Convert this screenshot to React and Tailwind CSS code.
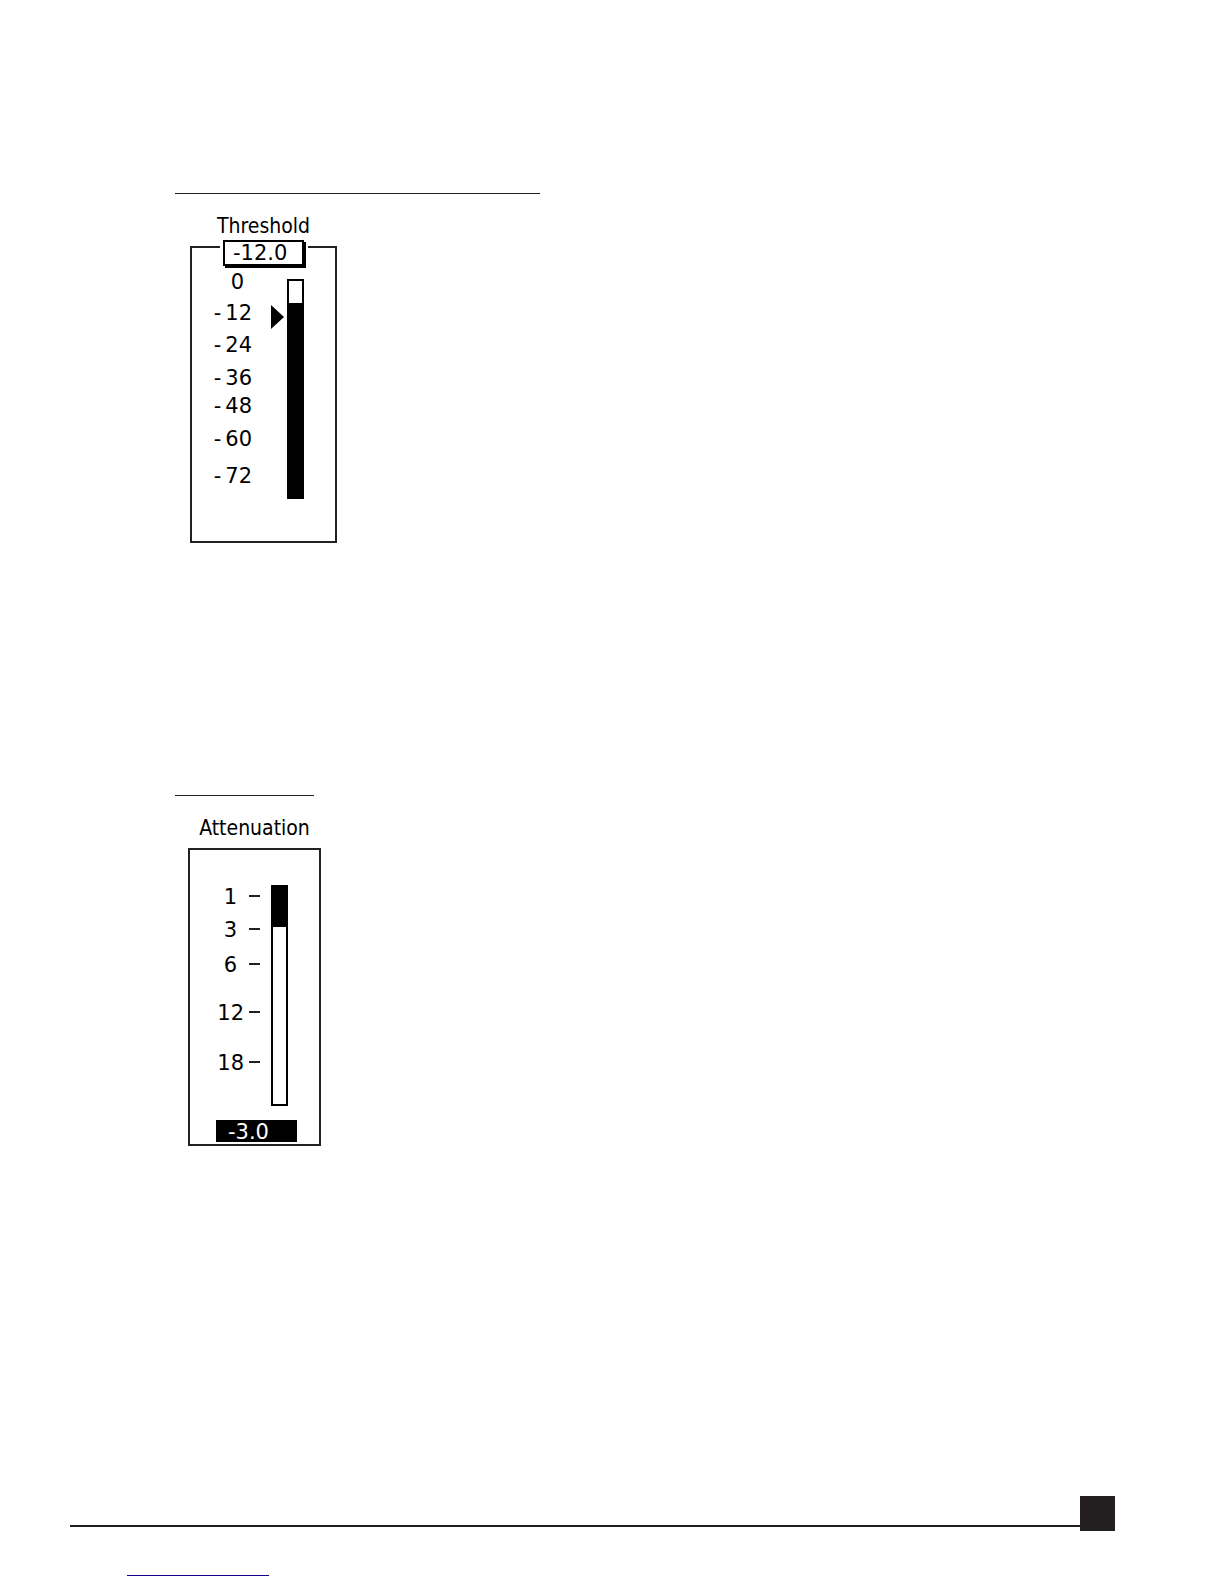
import { useState } from "react";

function ThresholdPanel() {
  const [level, setLevel] = useState(-12);
  const marks = [12, 24, 36, 48, 60, 72];
  return (
    <section className="ml-[15px] mt-5 w-[147px]">
      <label htmlFor="threshold-value" className="block text-center text-[21px] leading-6 font-['DejaVu_Sans_Condensed','DejaVu_Sans',sans-serif]">
        Threshold
      </label>
      <div className="mt-2 h-[297px] border-2 border-[#222]">
        <div className="relative -mt-2 ml-7 w-[88px] bg-white px-[3px] pb-[2px]">
          <input
            id="threshold-value"
            type="text"
            value={level.toFixed(1)}
            readOnly
            className="block h-[26px] w-[81px] border-2 border-black bg-white pl-2 text-[21px] leading-5 shadow-[2px_2px_0_black] outline-none"
          />
        </div>
        <div className="mt-[2px] flex items-start">
          <div className="grid w-[60px] grid-rows-[31px_32px_33px_28px_33px_37px_24px] text-right text-[21px] leading-6">
            <span className="pr-2">0</span>
            {marks.map((mark) => (
              <span key={mark}>
                <span className="pr-1">-</span>
                {mark}
              </span>
            ))}
          </div>
          <input
            type="range"
            aria-label="Threshold level"
            min={-72}
            max={0}
            value={level}
            onChange={(e) => setLevel(Number(e.target.value))}
            className="ml-[19px] mt-[2px] h-[222px] w-[13px] appearance-none bg-transparent [direction:rtl] [writing-mode:vertical-lr] [&::-webkit-slider-thumb]:h-6 [&::-webkit-slider-thumb]:w-[13px] [&::-webkit-slider-thumb]:appearance-none [&::-webkit-slider-thumb]:bg-black [&::-webkit-slider-thumb]:[clip-path:polygon(0_0,100%_50%,0_100%)]"
          />
          <div role="meter" aria-label="Input level" aria-valuemin={-72} aria-valuemax={0} aria-valuenow={-8} className="ml-[3px] mt-[9px] h-[220px] w-[17px] border-2 border-black pt-[22px]">
            <div className="h-full bg-black" />
          </div>
        </div>
      </div>
    </section>
  );
}

function AttenuationPanel() {
  const marks = ["1", "3", "6", "12", "18"];
  return (
    <section className="ml-[13px] mt-5 w-[133px]">
      <h2 className="text-center text-[21px] leading-6 font-['DejaVu_Sans_Condensed','DejaVu_Sans',sans-serif]">Attenuation</h2>
      <div className="mt-2 h-[298px] border-2 border-[#222]">
        <div className="mt-[35px] flex items-start">
          <div className="grid w-[70px] grid-rows-[33px_35px_48px_50px_24px] text-[21px] leading-6">
            {marks.map((mark) => (
              <div key={mark} className="flex h-6 justify-end">
                <span className={mark.length === 1 ? "pr-3" : "pr-[5px]"}>{mark}</span>
                <span className="mt-[10px] h-[2px] w-[11px] bg-[#222]" />
              </div>
            ))}
          </div>
          <div role="meter" aria-label="Attenuation" aria-valuemin={0} aria-valuemax={24} aria-valuenow={3} className="ml-[11px] h-[221px] w-[17px] border-2 border-black">
            <div className="h-10 bg-black" />
          </div>
        </div>
        <output className="ml-[26px] mt-[14px] block h-[22px] w-[81px] bg-black pl-3 text-[21px] leading-6 text-white">-3.0</output>
      </div>
    </section>
  );
}

export default function App() {
  return (
    <div className="bg-white pb-2 text-black font-['DejaVu_Sans',sans-serif]">
      <main className="pl-[175px] pt-[193px]">
        <hr className="w-[365px] border-t border-[#222]" />
        <ThresholdPanel />
        <hr className="mt-[252px] w-[139px] border-t border-[#222]" />
        <AttenuationPanel />
      </main>
      <footer className="mt-[350px]">
        <div className="ml-[70px] mr-[109px] flex items-start">
          <div className="mt-[29px] h-[2px] grow bg-[#231f20]" />
          <div className="size-[35px] bg-[#231f20]" />
        </div>
        <hr className="ml-[127px] mt-11 w-[142px] border-t border-[#12008c]" />
      </footer>
    </div>
  );
}
